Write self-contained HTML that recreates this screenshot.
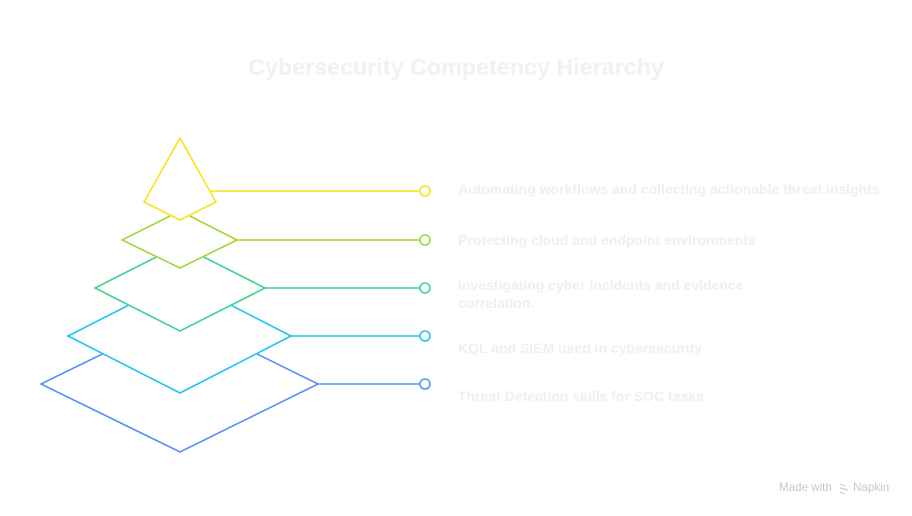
<!DOCTYPE html>
<html><head><meta charset="utf-8"><style>
html,body{margin:0;padding:0;background:#fff;width:912px;height:516px;overflow:hidden;font-family:"Liberation Sans",sans-serif}
.t{position:absolute;color:#efefef;font-size:14px;line-height:18px;left:458px;white-space:nowrap;font-weight:bold}
h1{position:absolute;margin:0;left:0;width:912px;text-align:center;top:54px;font-size:23.3px;color:#f1f1f1;font-weight:bold}
.m{position:absolute;left:779px;top:481px;font-size:11.6px;color:#c8c8c8}
</style></head><body>
<h1>Cybersecurity Competency Hierarchy</h1>
<svg width="912" height="516" style="position:absolute;left:0;top:0" fill="#fff" stroke-width="1.6">
<g stroke="#5591f5"><line x1="318" y1="384" x2="420" y2="384"/><circle cx="425" cy="384" r="5"/><polygon points="180,316 318,384 180,452 41,384"/></g>
<g stroke="#1ec0f5"><line x1="291" y1="336" x2="420" y2="336"/><circle cx="425" cy="336" r="5"/><polygon points="180,279 291,336 180,393 68,336"/></g>
<g stroke="#3ed68c"><line x1="265" y1="288" x2="420" y2="288"/><circle cx="425" cy="288" r="5"/><polygon points="180,245 265,288 180,331 95,288"/></g>
<g stroke="#a2d437"><line x1="237" y1="240" x2="420" y2="240"/><circle cx="425" cy="240" r="5"/><polygon points="180,211 237,240 180,268 122,240"/></g>
<g stroke="#fbe216"><line x1="211" y1="191" x2="420" y2="191"/><circle cx="425" cy="191" r="5"/><polygon points="180,138 216,202 180,220 144,202"/></g>
<g stroke="#c8c8c8" stroke-width="1.2"><line x1="840" y1="484" x2="845" y2="486"/><line x1="840" y1="488" x2="848" y2="490"/><line x1="840" y1="492" x2="845" y2="494"/></g>
</svg>
<div class="t" style="top:180px">Automating workflows and collecting actionable threat insights</div>
<div class="t" style="top:231px">Protecting cloud and endpoint environments</div>
<div class="t" style="top:276px">Investigating cyber incidents and evidence<br>correlation.</div>
<div class="t" style="top:339px">KQL and SIEM used in cybersecurity</div>
<div class="t" style="top:387px">Threat Detection skills for SOC tasks</div>
<div class="m">Made with <span style="margin-left:18px">Napkin</span></div>
</body></html>
